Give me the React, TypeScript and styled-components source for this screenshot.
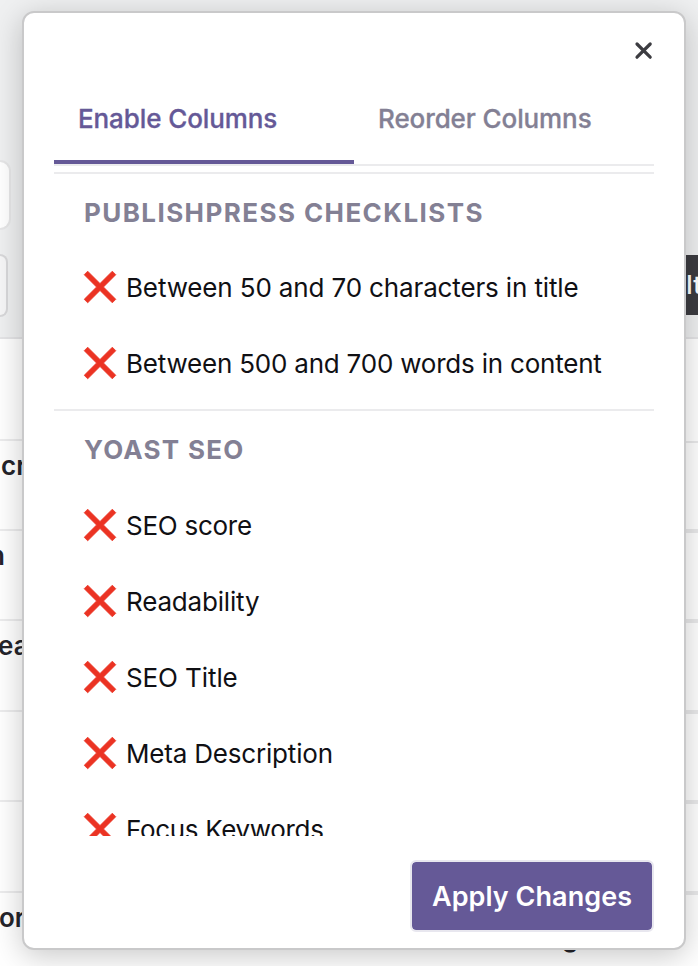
import React from "react";
import styled, { createGlobalStyle } from "styled-components";

const GlobalStyle = createGlobalStyle`
  * { box-sizing: border-box; }
  body { margin: 0; font-family: Inter, "Noto Sans", sans-serif; font-size: 26px; color: #24242a; }
`;

const Screen = styled.div`
  position: relative;
  width: 698px;
  height: 966px;
  overflow: hidden;
  background: #fff;
`;

const Backdrop = styled.div`
  display: flex;
  flex-direction: column;
  height: 100%;
`;

const Toolbar = styled.div`
  display: flex;
  justify-content: space-between;
  height: 339px;
  flex: none;
  background: #eff0f1;
  border-bottom: 2px solid #e4e4e6;
`;

const Fields = styled.div`
  display: flex;
  flex-direction: column;
  gap: 24px;
  padding-top: 160px;
`;

const Field = styled.div<{ $width: number; $height: number; $fill: string; $line: string }>`
  width: ${(p) => p.$width}px;
  height: ${(p) => p.$height}px;
  background: ${(p) => p.$fill};
  border: 2px solid ${(p) => p.$line};
  border-left: 0;
  border-radius: 0 12px 12px 0;
`;

const Tooltip = styled.div`
  width: 14px;
  height: 60px;
  margin-top: 255px;
  padding-left: 2px;
  overflow: hidden;
  background: #3c3c41;
  color: #fff;
  font-size: 25px;
  font-weight: 500;
  line-height: 60px;
  white-space: nowrap;
`;

const TableRow = styled.div<{ $height: number }>`
  display: flex;
  flex: none;
  justify-content: space-between;
  height: ${(p) => p.$height}px;
`;

const Cell = styled.div<{ $shift: number; $last?: boolean }>`
  width: 60px;
  padding-top: 9px;
  border-bottom: ${(p) => (p.$last ? 0 : 2)}px solid #ececed;
  font-weight: 600;
  line-height: 32px;
  text-indent: ${(p) => p.$shift}px;
  white-space: nowrap;
  overflow: hidden;
`;

const EdgeCell = styled.div<{ $line: number }>`
  width: 60px;
  height: calc(100% + 2px);
  border-bottom: ${(p) => p.$line}px solid #e9e9ea;
`;

const LastLine = styled.div`
  width: 136px;
  padding-top: 30px;
  font-weight: 600;
  line-height: 30px;
`;

const Dialog = styled.section`
  position: absolute;
  top: 11px;
  left: 22px;
  width: 664px;
  height: 939px;
  display: flex;
  flex-direction: column;
  padding: 0 30px;
  background: #fff;
  border: 2px solid #c9c9ca;
  border-radius: 12px;
  box-shadow: 0 6px 30px rgba(0, 0, 0, 0.22);
`;

const DialogTop = styled.header`
  display: flex;
  justify-content: flex-end;
  height: 62px;
  padding-top: 28px;
`;

const CloseButton = styled.button`
  width: 20px;
  height: 20px;
  padding: 0;
  border: 0;
  background: none;
  svg { display: block; }
`;

const Tabs = styled.nav`
  display: grid;
  grid-template-columns: 1fr 1fr;
  height: 91px;
  border-bottom: 2px solid #ebebed;
`;

const Tab = styled.div<{ $active?: boolean }>`
  height: 89px;
  padding-left: 24px;
  border-bottom: 4px solid ${(p) => (p.$active ? "#655997" : "transparent")};
  color: ${(p) => (p.$active ? "#655997" : "#838094")};
  font-weight: 500;
  line-height: 87px;
  letter-spacing: -0.1px;
  -webkit-text-stroke: 0.3px currentColor;
  white-space: nowrap;
`;

const List = styled.div`
  height: 664px;
  margin-top: 6px;
  overflow: hidden;
`;

const Group = styled.div`
  padding-bottom: 7px;
  border-top: 2px solid #ebebed;
`;

const GroupTitle = styled.h3<{ $height: number; $spacing: number }>`
  height: ${(p) => p.$height}px;
  margin: 0;
  padding-left: 30px;
  color: #838094;
  font-size: 26px;
  font-weight: 700;
  line-height: 78px;
  letter-spacing: ${(p) => p.$spacing}px;
`;

const Option = styled.div<{ $spacing: number }>`
  display: flex;
  align-items: center;
  gap: 9px;
  height: 76px;
  padding: 0 0 2px 29px;
  color: #101014;
  letter-spacing: ${(p) => p.$spacing}px;
  white-space: nowrap;
`;

const Footer = styled.footer`
  display: flex;
  justify-content: flex-end;
  padding-top: 24px;
`;

const ApplyButton = styled.button`
  width: 244px;
  height: 72px;
  padding: 0;
  border: 2px solid #e8e7ef;
  border-radius: 6px;
  background: #655997;
  background-clip: padding-box;
  color: #fff;
  font: 600 27px/70px Inter, sans-serif;
  letter-spacing: 0.05px;
`;

const Cross = () => (
  <svg width="34" height="34" viewBox="0 0 34 34" aria-hidden="true">
    <path
      d="M4.7 1.2 17 13.5 29.3 1.2 32.8 4.7 20.5 17 32.8 29.3 29.3 32.8 17 20.5 4.7 32.8 1.2 29.3 13.5 17 1.2 4.7Z"
      fill="#eb3323"
      stroke="#eb3323"
      strokeWidth="0.8"
      strokeLinejoin="round"
    />
  </svg>
);

const groups: { title: string; height: number; spacing: number; items: [string, number][] }[] = [
  {
    title: "PUBLISHPRESS CHECKLISTS",
    height: 76,
    spacing: 1.42,
    items: [
      ["Between 50 and 70 characters in title", -0.14],
      ["Between 500 and 700 words in content", -0.21],
    ],
  },
  {
    title: "YOAST SEO",
    height: 77,
    spacing: 1.25,
    items: [
      ["SEO score", -0.26],
      ["Readability", -0.18],
      ["SEO Title", -0.1],
      ["Meta Description", -0.19],
      ["Focus Keywords", -0.34],
    ],
  },
];

const rows = [
  { height: 102, text: "", shift: 0, line: 2 },
  { height: 90, text: "cr", shift: 1, line: 4 },
  { height: 90, text: "n", shift: -11, line: 4 },
  { height: 91, text: "ea", shift: -2, line: 4 },
  { height: 90, text: "", shift: 0, line: 4 },
  { height: 91, text: "", shift: 0, line: 4 },
];

export default function App() {
  return (
    <Screen>
      <GlobalStyle />
      <Backdrop>
        <Toolbar>
          <Fields>
            <Field $width={11} $height={70} $fill="#fff" $line="#e6e6e7" />
            <Field $width={8} $height={63} $fill="#f6f6f7" $line="#d8d8da" />
          </Fields>
          <Tooltip>It</Tooltip>
        </Toolbar>
        {rows.map((row, i) => (
          <TableRow key={i} $height={row.height}>
            <Cell $shift={row.shift}>{row.text}</Cell>
            <EdgeCell $line={row.line} />
          </TableRow>
        ))}
        <TableRow $height={73}>
          <Cell $shift={-1} $last>or</Cell>
          <LastLine>g</LastLine>
        </TableRow>
      </Backdrop>
      <Dialog role="dialog">
        <DialogTop>
          <CloseButton aria-label="Close">
            <svg width="20" height="20" viewBox="0 0 20 20">
              <path d="M3 3 16.2 16.2M16.2 3 3 16.2" stroke="#3c3c41" strokeWidth="3.2" strokeLinecap="round" />
            </svg>
          </CloseButton>
        </DialogTop>
        <Tabs>
          <Tab $active>Enable Columns</Tab>
          <Tab>Reorder Columns</Tab>
        </Tabs>
        <List>
          {groups.map((group) => (
            <Group key={group.title}>
              <GroupTitle $height={group.height} $spacing={group.spacing}>{group.title}</GroupTitle>
              {group.items.map(([label, spacing]) => (
                <Option key={label} $spacing={spacing}><Cross />{label}</Option>
              ))}
            </Group>
          ))}
        </List>
        <Footer>
          <ApplyButton>Apply Changes</ApplyButton>
        </Footer>
      </Dialog>
    </Screen>
  );
}
